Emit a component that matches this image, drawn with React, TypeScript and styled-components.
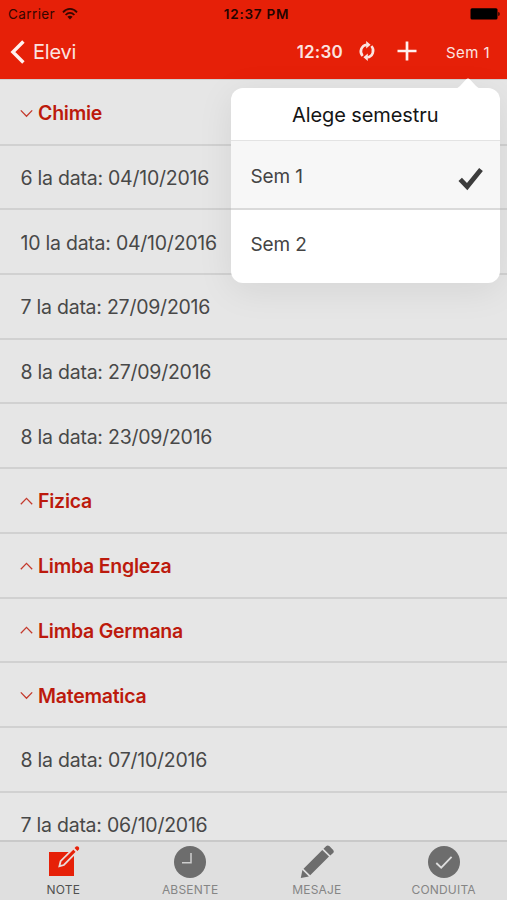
import React from "react";
import styled, { createGlobalStyle } from "styled-components";

const GlobalStyle = createGlobalStyle`
  * { box-sizing: border-box; }
  body { margin: 0; background: #e6e6e6; }
`;

const Screen = styled.div`
  position: relative;
  display: flex;
  flex-direction: column;
  width: 507px;
  height: 900px;
  overflow: hidden;
  background: #e6e6e6;
  color: #444;
  font-family: Inter, "Liberation Sans", sans-serif;
  white-space: nowrap;
`;

const Header = styled.header`
  flex: none;
  height: 79px;
  background: #e62008;
`;

const StatusBar = styled.div`
  display: grid;
  grid-template-columns: 1fr auto 1fr;
  align-items: center;
  height: 27px;
  padding: 0 7px 0 8px;
  font-size: 13.5px;
  color: #360600;
`;

const Carrier = styled.span`
  display: flex;
  align-items: center;
  gap: 7px;
  letter-spacing: 0.4px;
`;

const Clock = styled.span`
  font-weight: 600;
  font-size: 13.5px;
  letter-spacing: 0.75px;
  margin: 0 -3px 0 2px;
  color: #240400;
`;

const BatterySlot = styled.span`
  display: flex;
  justify-content: flex-end;
`;

const NavBar = styled.nav`
  display: flex;
  align-items: center;
  height: 50px;
  padding: 0 17px 0 10px;
  color: #fbe3e0;
`;

const BackButton = styled.a`
  display: flex;
  align-items: center;
  gap: 8px;
  font-size: 20px;
  letter-spacing: -0.2px;
`;

const NavTime = styled.span`
  margin-left: auto;
  font-size: 17px;
  font-weight: 600;
  letter-spacing: 0.2px;
`;

const NavIcon = styled.span<{ $gap: number }>`
  display: flex;
  margin: -2px 0 0 ${(p) => p.$gap}px;
`;

const SemesterButton = styled.span`
  margin-left: 29px;
  font-size: 15px;
  letter-spacing: 0.45px;
`;

const List = styled.main`
  flex: 1;
  min-height: 0;
  overflow: hidden;
  padding-top: 1px;
  border-top: 1px solid #cfcfcf;
`;

const Row = styled.div<{ $subject?: boolean }>`
  display: flex;
  align-items: center;
  gap: 5px;
  height: 64.7px;
  padding: 2px 20px 0 ${(p) => (p.$subject ? 20 : 20.5)}px;
  border-bottom: 2px solid #d1d1d1;
  font-size: 19.5px;
  font-weight: ${(p) => (p.$subject ? 600 : 400)};
  letter-spacing: -0.24px;
  color: ${(p) => (p.$subject ? "#bc1a0d" : "#484848")};
`;

const TabBar = styled.footer`
  flex: none;
  display: grid;
  grid-template-columns: repeat(4, 1fr);
  height: 60px;
  border-top: 2px solid #c9c9c9;
  background: #dfdfdf;
`;

const Tab = styled.div<{ $active?: boolean }>`
  display: flex;
  flex-direction: column;
  align-items: center;
  padding: 2px 0 0;
  font-size: 12px;
  line-height: 16px;
  letter-spacing: 0.2px;
  color: ${(p) => (p.$active ? "#505050" : "#858585")};
  svg { flex: none; margin-bottom: 4px; }
`;

const Popover = styled.section`
  position: absolute;
  left: 231px;
  top: 88px;
  width: 268.5px;
  height: 195px;
  border-radius: 12px;
  background: #fff;
  box-shadow: 0 7px 36px rgba(0, 0, 0, 0.08);
`;

const Arrow = styled.svg`
  position: absolute;
  right: 19px;
  top: -10px;
`;

const PopoverTitle = styled.h2`
  display: flex;
  align-items: center;
  justify-content: center;
  height: 52px;
  margin: 0;
  padding-top: 2px;
  font-size: 20px;
  font-weight: 400;
  letter-spacing: -0.1px;
  color: #151515;
`;

const Option = styled.div<{ $selected?: boolean }>`
  display: flex;
  align-items: center;
  justify-content: space-between;
  height: ${(p) => (p.$selected ? 70 : 68)}px;
  padding: ${(p) => (p.$selected ? "3px 17px 0 19.5px" : "0 17px 0 19.5px")};
  border-top: ${(p) => (p.$selected ? "1px solid #e3e3e3" : "0")};
  border-bottom: ${(p) => (p.$selected ? "2px solid #dadada" : "0")};
  background: ${(p) => (p.$selected ? "#f7f7f7" : "transparent")};
  font-size: 19px;
  letter-spacing: -0.1px;
  svg { margin-top: 6px; }
`;

const WifiIcon = () => (
  <svg width="16" height="12" viewBox="0 0 16 12">
    <g fill="none" stroke="currentColor" strokeWidth="1.8">
      <path d="M1 4.3C5-.2 11-.2 15 4.3" />
      <path d="M3.6 7C6.2 4.2 9.8 4.2 12.4 7" />
    </g>
    <path d="M5.4 8.7Q8 6.7 10.6 8.7L8 11.6Z" fill="currentColor" />
  </svg>
);

const BatteryIcon = () => (
  <svg width="30" height="12" viewBox="0 0 30 12">
    <rect x="0.5" y="0.3" width="27" height="11.2" rx="1.5" fill="#000" />
    <path d="M28.2 4q1.6.2 1.6 2t-1.6 2z" fill="#300500" />
  </svg>
);

const BackIcon = () => (
  <svg width="15" height="24" viewBox="0 0 15 24">
    <path d="M13.4 1.5 2.9 12l10.5 10.5" fill="none" stroke="#fff0ee" strokeWidth="3.4" />
  </svg>
);

const SyncIcon = () => (
  <svg width="18" height="20" viewBox="0 0 18 20">
    <g fill="none" stroke="currentColor" strokeWidth="2.6">
      <path d="M4.6 15A6.8 6.8 0 0 1 8.8 3.7" />
      <path d="M13.4 5A6.8 6.8 0 0 1 9.2 16.3" />
    </g>
    <path d="M8.2 0v7.4L12.6 3.7zM9.8 20v-7.4L5.4 16.3z" fill="currentColor" />
  </svg>
);

const PlusIcon = () => (
  <svg width="20" height="20" viewBox="0 0 20 20">
    <path d="M10 .5v19M.5 10h19" stroke="#fff0ee" strokeWidth="2.7" />
  </svg>
);

const Chevron = ({ open }: { open: boolean }) => (
  <svg width="13" height="9" viewBox="0 0 13 9">
    <path
      d={open ? "M.8 1.4 6.5 7.2 12.2 1.4" : "M.8 7.2 6.5 1.4 12.2 7.2"}
      fill="none"
      stroke="#c43a2d"
      strokeWidth="1.3"
    />
  </svg>
);

const SelectedIcon = () => (
  <svg width="25" height="24" viewBox="0 0 25 24">
    <path d="m2.2 12.4 7 7.2L23 2.6" fill="none" stroke="#3c3c3c" strokeWidth="4.8" />
  </svg>
);

const NoteIcon = () => (
  <svg width="34" height="34" viewBox="0 0 34 34">
    <path d="M3 8h25v24H3z" fill="#e62008" />
    <path d="m13.4 22.2 1.2-5L27.4 4.4l3.4 3.4-12.9 13.2z" fill="#e62008" stroke="#eadbd9" strokeWidth="1.8" />
    <path d="m28.6 4 1.4-1.4q1.2-1 2.5.2t.4 2.7L31.4 7z" fill="#e62008" />
  </svg>
);

const ClockIcon = () => (
  <svg width="34" height="34" viewBox="0 0 34 34">
    <circle cx="17" cy="18" r="16" fill="#6d6d6d" />
    <path d="M18 9v9.8h-9" fill="none" stroke="#cecece" strokeWidth="1.5" />
  </svg>
);

const PencilIcon = () => (
  <svg width="36" height="34" viewBox="0 0 36 34">
    <path d="M1.8 34 3.4 25.9 9.9 32.4zM4.5 24.7 23.3 5.9l6.7 6.6-18.8 18.8zM24.5 4.7 27.3 1.9q1.5-1 3 .2l3.9 3.9q1.2 1.6.2 2.8l-3.1 2.6z" fill="#6d6d6d" />
  </svg>
);

const ConductIcon = () => (
  <svg width="34" height="34" viewBox="0 0 34 34">
    <circle cx="17" cy="18" r="16" fill="#6d6d6d" />
    <path d="m9.3 19 4.9 4.7L24.6 12.8" fill="none" stroke="#dedede" strokeWidth="1.8" />
  </svg>
);

type Entry = { text: string; subject?: boolean; open?: boolean };

const entries: Entry[] = [
  { text: "Chimie", subject: true, open: true },
  { text: "6 la data: 04/10/2016" },
  { text: "10 la data: 04/10/2016" },
  { text: "7 la data: 27/09/2016" },
  { text: "8 la data: 27/09/2016" },
  { text: "8 la data: 23/09/2016" },
  { text: "Fizica", subject: true },
  { text: "Limba Engleza", subject: true },
  { text: "Limba Germana", subject: true },
  { text: "Matematica", subject: true, open: true },
  { text: "8 la data: 07/10/2016" },
  { text: "7 la data: 06/10/2016" },
];

export default function App() {
  return (
    <>
      <GlobalStyle />
      <Screen>
        <Header>
          <StatusBar>
            <Carrier>Carrier <WifiIcon /></Carrier>
            <Clock>12:37 PM</Clock>
            <BatterySlot><BatteryIcon /></BatterySlot>
          </StatusBar>
          <NavBar>
            <BackButton><BackIcon />Elevi</BackButton>
            <NavTime>12:30</NavTime>
            <NavIcon $gap={15}><SyncIcon /></NavIcon>
            <NavIcon $gap={21}><PlusIcon /></NavIcon>
            <SemesterButton>Sem 1</SemesterButton>
          </NavBar>
        </Header>
        <List>
          {entries.map((e) => (
            <Row key={e.text} $subject={e.subject}>
              {e.subject && <Chevron open={!!e.open} />}
              <span>{e.text}</span>
            </Row>
          ))}
        </List>
        <TabBar>
          <Tab $active><NoteIcon />NOTE</Tab>
          <Tab><ClockIcon />ABSENTE</Tab>
          <Tab><PencilIcon />MESAJE</Tab>
          <Tab><ConductIcon />CONDUITA</Tab>
        </TabBar>
        <Popover>
          <Arrow width="26" height="11" viewBox="0 0 26 11">
            <path d="M0 11Q3 10 5 8L11 1.5q2-2 4 0L21 8q2 2 5 3z" fill="#fff" />
          </Arrow>
          <PopoverTitle>Alege semestru</PopoverTitle>
          <Option $selected>Sem 1 <SelectedIcon /></Option>
          <Option>Sem 2</Option>
        </Popover>
      </Screen>
    </>
  );
}
